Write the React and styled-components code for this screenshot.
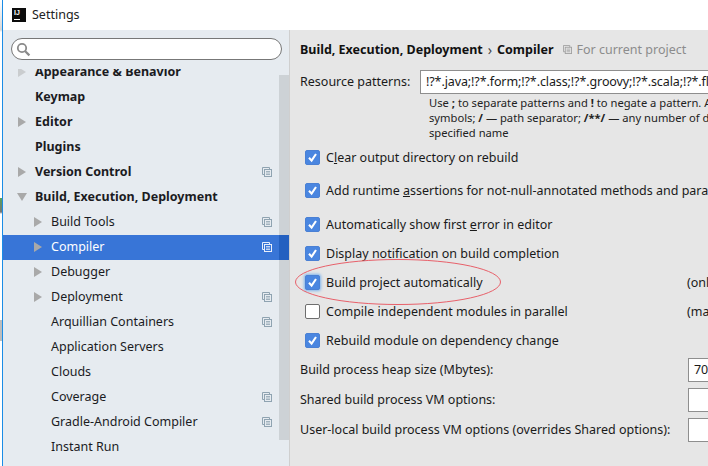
import React from 'react';
import styled, { createGlobalStyle } from 'styled-components';

const GlobalStyle = createGlobalStyle`
	html, body {
		margin: 0;
		padding: 0;
		background: #fff;
	}
	* {
		box-sizing: border-box;
	}
`;

const Page = styled.div`
	position: relative;
	display: flex;
	width: 708px;
	height: 466px;
	overflow: hidden;
	font-family: 'Noto Sans', 'Open Sans', sans-serif;
	font-size: 12.5px;
	color: #1a1a1a;
`;

const DesktopEdge = styled.div`
	flex: 0 0 2px;
	background: linear-gradient(
		to bottom,
		#fff 0,
		#d8d8d8 30px,
		#fff 32px,
		#fff 198px,
		#58a05c 198px,
		#777 212px,
		#fff 214px,
		#fff 320px,
		#bdbdbd 320px,
		#bdbdbd 341px,
		#fff 341px
	);
`;

const Window = styled.div`
	flex: 1;
	min-width: 0;
	display: flex;
	flex-direction: column;
	border-left: 1px solid #1a8ce6;
`;

const TitleBar = styled.div`
	flex: 0 0 30px;
	display: flex;
	align-items: center;
	gap: 6px;
	padding-left: 9px;
	background: #fff;
`;

const AppIcon = styled.div`
	width: 14px;
	height: 14px;
	background: #0c0c0c;
	color: #fff;
	font-family: 'Liberation Sans', sans-serif;
	font-size: 7px;
	font-weight: 700;
	line-height: 9px;
	padding-left: 2px;
	position: relative;
	&::after {
		content: '';
		position: absolute;
		left: 2px;
		bottom: 2px;
		width: 6px;
		height: 1px;
		background: #fff;
	}
`;

const TitleText = styled.span`
	padding-bottom: 2px;
	color: #222;
`;

const Body = styled.div`
	flex: 1;
	min-height: 0;
	display: flex;
`;

const Sidebar = styled.div`
	position: relative;
	flex: 0 0 287px;
	display: flex;
	flex-direction: column;
	background: #e6ebf0;
	border-right: 1px solid #cfcfcf;
`;

const SearchArea = styled.div`
	flex: 0 0 39px;
	padding: 8px 7px 0 8px;
`;

const SearchBox = styled.div`
	display: flex;
	align-items: center;
	height: 22px;
	padding-left: 4px;
	background: #fff;
	border: 1px solid #777;
	border-radius: 11px;
`;

const Tree = styled.div`
	flex: 1;
	min-height: 0;
	overflow: hidden;
`;

const TreeInner = styled.div`
	margin-top: -9px;
`;

const Row = styled.div`
	display: flex;
	align-items: center;
	height: 25px;
	padding: 0 17px 1px ${(p) => (p.$level ? 31 : 15)}px;
	background: ${(p) => (p.$selected ? '#3875d7' : 'transparent')};
	color: ${(p) => (p.$selected ? '#fff' : '#1b1b1f')};
	font-weight: ${(p) => (p.$level ? 400 : 700)};
`;

const ArrowSlot = styled.span`
	flex: 0 0 17px;
	display: flex;
	align-items: center;
	opacity: ${(p) => (p.$faded ? 0.45 : 1)};
`;

const DownArrowSvg = styled.svg`
	margin-left: -1px;
`;

const RowLabel = styled.span`
	flex: 1;
	padding-bottom: 2px;
	white-space: nowrap;
`;

const Scrollbar = styled.div`
	position: absolute;
	top: 45px;
	right: 0;
	width: 10px;
	height: 365px;
	background: #cdd2d6;
`;

const ScrollOverSelection = styled.div`
	position: absolute;
	top: 205px;
	right: 0;
	width: 10px;
	height: 25px;
	background: #2360c0;
`;

const Content = styled.div`
	flex: 1;
	min-width: 0;
	display: flex;
	flex-direction: column;
	padding: 0 0 0 10px;
	background: #e6e6e6;
	overflow: hidden;
	white-space: nowrap;
`;

const Breadcrumb = styled.div`
	display: flex;
	align-items: center;
	height: 22px;
	margin-top: 8px;
	font-weight: 700;
	color: #111;
`;

const Chevron = styled.span`
	margin: 0 5px;
	font-size: 14px;
	font-weight: 400;
	color: #444;
`;

const ProjectScope = styled.span`
	display: flex;
	align-items: center;
	gap: 4px;
	margin-left: 10px;
	font-weight: 400;
	color: #8c8c8c;
`;

const PatternRow = styled.div`
	display: flex;
	align-items: center;
	height: 23px;
	margin-top: 10px;
`;

const PatternLabel = styled.span`
	flex: 0 0 120px;
`;

const TextField = styled.div`
	flex: 0 0 auto;
	width: ${(p) => p.$width}px;
	height: 24px;
	padding-left: 5px;
	background: #fff;
	border: 1px solid #8e8e8e;
	line-height: 21px;
	letter-spacing: -0.1px;
	overflow: hidden;
`;

const Hint = styled.div`
	margin: 2px 0 0 129px;
	font-size: 11.2px;
	line-height: 15px;
	color: #222;
`;

const CheckRow = styled.div`
	display: flex;
	align-items: center;
	height: 29px;
	margin-top: ${(p) => p.$top || 0}px;
	padding-left: 5px;
`;

const CheckBox = styled.span`
	flex: 0 0 15px;
	display: flex;
	align-items: center;
	justify-content: center;
	width: 15px;
	height: 15px;
	margin-right: 6px;
	border-radius: 2px;
	background: ${(p) => (p.$checked ? '#4a86e0' : '#fff')};
	border: 1px solid ${(p) => (p.$checked ? '#4a80d4' : '#6e6e6e')};
	box-shadow: ${(p) => (p.$focused ? '0 0 3px 1px #7db3ec' : 'none')};
`;

const CheckLabel = styled.span`
	flex: 0 0 ${(p) => p.$width || 361}px;
`;

const SideNote = styled.span``;

const FormRow = styled.div`
	display: flex;
	align-items: center;
	height: 30px;
`;

const FormLabel = styled.span`
	flex: 0 0 388px;
	padding-bottom: 2px;
`;

const Ellipse = styled.svg`
	position: absolute;
	left: 294px;
	top: 257px;
	width: 210px;
	height: 50px;
`;

const SearchIcon = () => (
	<svg width="15" height="15" viewBox="0 0 15 15" fill="none" stroke="#8a8a8a">
		<circle cx="6" cy="6" r="4.2" strokeWidth="1.8" />
		<path d="M9.2 9.2 L13.4 13.4" strokeWidth="2.2" />
	</svg>
);

const ArrowRight = () => (
	<svg width="8" height="10" viewBox="0 0 8 10">
		<path d="M0 0 L8 5 L0 10 Z" fill="#a9a9a9" />
	</svg>
);

const ArrowDown = () => (
	<DownArrowSvg width="10" height="8" viewBox="0 0 10 8">
		<path d="M0 0 L10 0 L5 8 Z" fill="#a9a9a9" />
	</DownArrowSvg>
);

const CopyIcon = ({ color = '#8fa3b1', size = 10 }) => (
	<svg width={size} height={size} viewBox="0 0 10 10" fill="none" stroke={color} strokeWidth="1">
		<path d="M2.5 7.5 H0.5 V0.5 H7.5 V2.5" />
		<rect x="2.5" y="2.5" width="7" height="7" />
		<path d="M4 4.5 H8 M4 6 H8 M4 7.5 H8" strokeWidth="0.8" />
	</svg>
);

const Tick = () => (
	<svg width="11" height="11" viewBox="0 0 11 11" fill="none">
		<path d="M2 5.8 L4.6 8.6 L9 2" stroke="#fff" strokeWidth="2.1" />
	</svg>
);

const treeRows = [
	{ label: 'Appearance & Behavior', arrow: 'right', faded: true },
	{ label: 'Keymap' },
	{ label: 'Editor', arrow: 'right' },
	{ label: 'Plugins' },
	{ label: 'Version Control', arrow: 'right', copy: true },
	{ label: 'Build, Execution, Deployment', arrow: 'down' },
	{ label: 'Build Tools', level: 1, arrow: 'right', copy: true },
	{ label: 'Compiler', level: 1, arrow: 'right', copy: true, selected: true },
	{ label: 'Debugger', level: 1, arrow: 'right' },
	{ label: 'Deployment', level: 1, arrow: 'right', copy: true },
	{ label: 'Arquillian Containers', level: 1, copy: true },
	{ label: 'Application Servers', level: 1 },
	{ label: 'Clouds', level: 1 },
	{ label: 'Coverage', level: 1, copy: true },
	{ label: 'Gradle-Android Compiler', level: 1, copy: true },
	{ label: 'Instant Run', level: 1 },
];

const App = () => {
	return (
		<Page>
			<GlobalStyle />
			<DesktopEdge />
			<Window>
				<TitleBar>
					<AppIcon>IJ</AppIcon>
					<TitleText>Settings</TitleText>
				</TitleBar>
				<Body>
					<Sidebar>
						<SearchArea>
							<SearchBox>
								<SearchIcon />
							</SearchBox>
						</SearchArea>
						<Scrollbar />
						<Tree>
							<TreeInner>
								{treeRows.map((row) => (
									<Row key={row.label} $level={row.level} $selected={row.selected}>
										<ArrowSlot $faded={row.faded}>
											{row.arrow === 'right' && <ArrowRight />}
											{row.arrow === 'down' && <ArrowDown />}
										</ArrowSlot>
										<RowLabel>{row.label}</RowLabel>
										{row.copy && <CopyIcon color={row.selected ? '#e8eefa' : '#8fa3b1'} />}
									</Row>
								))}
							</TreeInner>
						</Tree>
						<ScrollOverSelection />
					</Sidebar>
					<Content>
						<Breadcrumb>
							Build, Execution, Deployment
							<Chevron>›</Chevron>
							Compiler
							<ProjectScope>
								<CopyIcon color="#a0a0a0" size={9} />
								For current project
							</ProjectScope>
						</Breadcrumb>
						<PatternRow>
							<PatternLabel>Resource patterns:</PatternLabel>
							<TextField $width={300}>!?*.java;!?*.form;!?*.class;!?*.groovy;!?*.scala;!?*.flex;!?*.kt;!?*.clj;!?*.aj</TextField>
						</PatternRow>
						<Hint>
							Use <b>;</b> to separate patterns and <b>!</b> to negate a pattern. Accepted wildcards:
							<br />
							symbols; <b>/</b> — path separator; <b>/**/</b> — any number of directories
							<br />
							specified name
						</Hint>
						<CheckRow $top={3}>
							<CheckBox $checked><Tick /></CheckBox>
							<CheckLabel>C<u>l</u>ear output directory on rebuild</CheckLabel>
						</CheckRow>
						<CheckRow $top={4}>
							<CheckBox $checked><Tick /></CheckBox>
							<CheckLabel $width={500}>Add runtime <u>a</u>ssertions for not-null-annotated methods and parameters</CheckLabel>
						</CheckRow>
						<CheckRow $top={5}>
							<CheckBox $checked><Tick /></CheckBox>
							<CheckLabel>Automatically show first <u>e</u>rror in editor</CheckLabel>
						</CheckRow>
						<CheckRow>
							<CheckBox $checked><Tick /></CheckBox>
							<CheckLabel>Display notification on build completion</CheckLabel>
						</CheckRow>
						<CheckRow>
							<CheckBox $checked $focused><Tick /></CheckBox>
							<CheckLabel>Build project automatically</CheckLabel>
							<SideNote>(only works while not running / debugging)</SideNote>
						</CheckRow>
						<CheckRow>
							<CheckBox />
							<CheckLabel>Compile independent modules in parallel</CheckLabel>
							<SideNote>(may require larger heap size)</SideNote>
						</CheckRow>
						<CheckRow>
							<CheckBox $checked><Tick /></CheckBox>
							<CheckLabel>Rebuild module on dependency change</CheckLabel>
						</CheckRow>
						<FormRow>
							<FormLabel>Build process heap size (Mbytes):</FormLabel>
							<TextField $width={60}>700</TextField>
						</FormRow>
						<FormRow>
							<FormLabel>Shared build process VM options:</FormLabel>
							<TextField $width={60} />
						</FormRow>
						<FormRow>
							<FormLabel>User-local build process VM options (overrides Shared options):</FormLabel>
							<TextField $width={60} />
						</FormRow>
					</Content>
				</Body>
			</Window>
			<Ellipse viewBox="0 0 210 50" fill="none">
				<ellipse cx="104" cy="25" rx="102.5" ry="22.5" stroke="#e8606a" strokeWidth="1" />
			</Ellipse>
		</Page>
	);
};

export default App;
